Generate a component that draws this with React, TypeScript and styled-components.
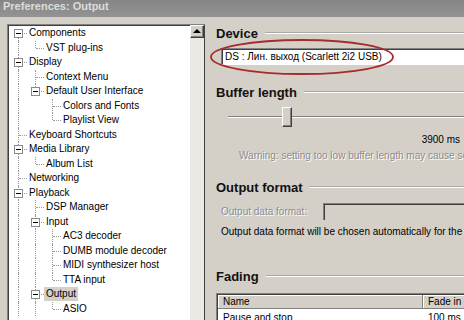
import React from "react";
import styled, { createGlobalStyle } from "styled-components";

const GlobalStyle = createGlobalStyle`
  html, body { margin: 0; padding: 0; background: #d4d0c8; }
  body { font-family: "Liberation Sans", Arial, sans-serif; }
`;

const Window = styled.div`
  width: 464px;
  height: 320px;
  overflow: hidden;
  display: flex;
  flex-direction: column;
  background: #d4d0c8;
  font: 10px "Liberation Sans", Arial, sans-serif;
  color: #000;
`;

const TitleBar = styled.div`
  flex: none;
  height: 17px;
  line-height: 16px;
  padding-left: 3px;
  background: linear-gradient(#868686, #939393);
  color: #dcdcdc;
  font: bold 11px "Liberation Sans", Arial, sans-serif;
`;

const Body = styled.div`
  flex: 1;
  display: flex;
  align-items: flex-start;
  padding-left: 7px;
  min-height: 0;
`;

const TreePanel = styled.div`
  flex: none;
  width: 198px;
  height: 320px;
  margin-top: 7px;
  box-sizing: border-box;
  display: flex;
  background: #fff;
  border-left: 1px solid #808080;
  border-top: 1px solid #808080;
  box-shadow: inset 1px 1px #404040;
`;

const TreeList = styled.div`
  flex: 1;
  padding: 1px 0 0 2px;
  overflow: hidden;
`;

const TreeRow = styled.div`
  display: flex;
  align-items: stretch;
  height: 14.5px;
`;

const Guide = styled.span<{ $line: boolean }>`
  flex: none;
  width: 17px;
  position: relative;
  &::before {
    content: "";
    display: ${(p) => (p.$line ? "block" : "none")};
    position: absolute;
    left: 8px;
    top: 0;
    bottom: 0;
    border-left: 1px dotted #9a9a9a;
  }
`;

const Connector = styled.span<{ $first?: boolean; $last?: boolean }>`
  flex: none;
  width: 17px;
  position: relative;
  &::before {
    content: "";
    position: absolute;
    left: 8px;
    top: ${(p) => (p.$first ? "50%" : "0")};
    bottom: ${(p) => (p.$last ? "50%" : "0")};
    border-left: 1px dotted #9a9a9a;
  }
  &::after {
    content: "";
    position: absolute;
    left: 9px;
    right: 0;
    top: 50%;
    border-top: 1px dotted #9a9a9a;
  }
`;

const Expander = styled.span`
  position: absolute;
  z-index: 1;
  left: 4px;
  top: calc(50% - 4px);
  width: 7px;
  height: 7px;
  border: 1px solid #8a8a8a;
  background: #fff;
  &::after {
    content: "";
    position: absolute;
    left: 1px;
    right: 1px;
    top: 3px;
    height: 1px;
    background: #000;
  }
`;

const Label = styled.span<{ $selected?: boolean }>`
  align-self: center;
  padding: 1px 2px;
  line-height: 12px;
  white-space: nowrap;
  background: ${(p) => (p.$selected ? "#d4d0c8" : "transparent")};
`;

const ScrollBar = styled.div`
  flex: none;
  width: 14px;
  display: flex;
  flex-direction: column;
  background: #ebe9e5;
  border-right: 1px solid #404040;
`;

const ArrowButton = styled.div`
  flex: none;
  height: 13px;
  box-sizing: border-box;
  background: #d4d0c8;
  border: 1px solid;
  border-color: #fff #404040 #404040 #fff;
  box-shadow: inset -1px -1px #808080;
  display: flex;
  align-items: center;
  justify-content: center;
  &::after {
    content: "";
    width: 0;
    height: 0;
    border-left: 4px solid transparent;
    border-right: 4px solid transparent;
    border-bottom: 4px solid #000;
    margin-bottom: 1px;
  }
`;

const RightPanel = styled.div`
  flex: none;
  width: 300px;
  margin-left: 11px;
  padding-top: 8px;
  position: relative;
  display: flex;
  flex-direction: column;
  & > * { flex-shrink: 0; }
`;

const SectionHeading = styled.div<{ $mt: number }>`
  display: flex;
  align-items: center;
  gap: 7px;
  height: 16px;
  margin-top: ${(p) => p.$mt}px;
  font: bold 13px "Liberation Sans", Arial, sans-serif;
  color: #111;
  &::after {
    content: "";
    flex: 1;
    border-top: 1px solid #a8a8a8;
    border-bottom: 1px solid #fff;
  }
`;

const TextField = styled.div`
  margin: 7px 0 0 5px;
  height: 17px;
  box-sizing: border-box;
  background: #fff;
  border-top: 1px solid #808080;
  border-left: 1px solid #808080;
  border-bottom: 1px solid #fff;
  box-shadow: inset 1px 1px #404040;
  display: flex;
  align-items: center;
  padding-left: 3px;
  white-space: nowrap;
`;

const Ellipse = styled.svg`
  position: absolute;
  left: -6px;
  top: 22px;
  overflow: visible;
  pointer-events: none;
`;

const SliderTrack = styled.div`
  position: relative;
  margin: 7px 0 0 12px;
  height: 20px;
  &::before {
    content: "";
    position: absolute;
    left: 0;
    right: 0;
    top: 9px;
    border-top: 1px solid #808080;
    border-bottom: 1px solid #fff;
  }
`;

const SliderThumb = styled.div`
  position: absolute;
  top: 0;
  width: 10px;
  height: 20px;
  box-sizing: border-box;
  background: #d4d0c8;
  border: 1px solid;
  border-color: #fff #404040 #404040 #fff;
  box-shadow: inset -1px -1px #808080;
`;

const ValueText = styled.div`
  margin-top: 7px;
  width: 244px;
  text-align: right;
  line-height: 12px;
`;

const DisabledText = styled.div<{ $ml: number; $mt: number }>`
  margin: ${(p) => p.$mt}px 0 0 ${(p) => p.$ml}px;
  line-height: 12px;
  color: #8c8c8c;
  text-shadow: 1px 1px #fff;
  white-space: nowrap;
`;

const FormatRow = styled.div`
  display: flex;
  align-items: center;
  margin: 8px 0 0 5px;
  height: 17px;
`;

const FormatLabel = styled.span`
  flex: none;
  width: 102px;
  color: #8c8c8c;
  text-shadow: 1px 1px #fff;
  white-space: nowrap;
`;

const DisabledCombo = styled.div`
  flex: 1;
  align-self: stretch;
  box-sizing: border-box;
  background: #d4d0c8;
  border-top: 1px solid #808080;
  border-left: 1px solid #808080;
  box-shadow: inset 1px 1px #404040;
`;

const PlainText = styled.div`
  margin: 6px 0 0 5px;
  line-height: 12px;
  white-space: nowrap;
`;

const Table = styled.div`
  margin-top: 9px;
  background: #fff;
  border-top: 1px solid #808080;
  border-left: 1px solid #808080;
  box-shadow: inset 1px 1px #404040;
  padding: 1px 0 0 1px;
`;

const TableRow = styled.div<{ $header?: boolean }>`
  display: flex;
  height: ${(p) => (p.$header ? 14 : 17)}px;
`;

const HeaderCell = styled.div<{ $w: number }>`
  flex: none;
  width: ${(p) => p.$w}px;
  box-sizing: border-box;
  background: #d4d0c8;
  border-right: 1px solid #808080;
  border-bottom: 1px solid #808080;
  box-shadow: inset 1px 1px #fff;
  padding-left: 5px;
  line-height: 13px;
  white-space: nowrap;
`;

const Cell = styled.div<{ $w: number }>`
  flex: none;
  width: ${(p) => p.$w}px;
  box-sizing: border-box;
  padding: 0 5px;
  line-height: 17px;
  white-space: nowrap;
`;

type Row = {
  label: string;
  guides: boolean[];
  expanded?: boolean;
  first?: boolean;
  last?: boolean;
  selected?: boolean;
};

const rows: Row[] = [
  { label: "Components", guides: [], expanded: true, first: true },
  { label: "VST plug-ins", guides: [true], last: true },
  { label: "Display", guides: [], expanded: true },
  { label: "Context Menu", guides: [true] },
  { label: "Default User Interface", guides: [true], expanded: true, last: true },
  { label: "Colors and Fonts", guides: [true, false] },
  { label: "Playlist View", guides: [true, false], last: true },
  { label: "Keyboard Shortcuts", guides: [] },
  { label: "Media Library", guides: [], expanded: true },
  { label: "Album List", guides: [true], last: true },
  { label: "Networking", guides: [] },
  { label: "Playback", guides: [], expanded: true },
  { label: "DSP Manager", guides: [true] },
  { label: "Input", guides: [true], expanded: true },
  { label: "AC3 decoder", guides: [true, true] },
  { label: "DUMB module decoder", guides: [true, true] },
  { label: "MIDI synthesizer host", guides: [true, true] },
  { label: "TTA input", guides: [true, true], last: true },
  { label: "Output", guides: [true], expanded: true, selected: true },
  { label: "ASIO", guides: [true, true], last: true },
];

const bufferMs = 3900;
const bufferMax = 20000;
const trackWidth = 288;
const thumbLeft = Math.round((bufferMs / bufferMax) * (trackWidth - 10));

export default function App() {
  return (
    <>
      <GlobalStyle />
      <Window>
        <TitleBar>Preferences: Output</TitleBar>
        <Body>
          <TreePanel>
            <TreeList>
              {rows.map((r) => (
                <TreeRow key={r.label}>
                  {r.guides.map((g, i) => (
                    <Guide key={i} $line={g} />
                  ))}
                  <Connector $first={r.first} $last={r.last}>
                    {r.expanded && <Expander />}
                  </Connector>
                  <Label $selected={r.selected}>{r.label}</Label>
                </TreeRow>
              ))}
            </TreeList>
            <ScrollBar>
              <ArrowButton />
            </ScrollBar>
          </TreePanel>
          <RightPanel>
            <SectionHeading $mt={0}>Device</SectionHeading>
            <TextField>DS : Лин. выход (Scarlett 2i2 USB)</TextField>
            <Ellipse width="184" height="36" viewBox="0 0 184 36">
              <ellipse cx="92" cy="18" rx="91" ry="17" fill="none" stroke="#a82c2c" strokeWidth="1.8" />
            </Ellipse>
            <SectionHeading $mt={19}>Buffer length</SectionHeading>
            <SliderTrack>
              <SliderThumb style={{ left: thumbLeft }} />
            </SliderTrack>
            <ValueText>{bufferMs} ms</ValueText>
            <DisabledText $ml={23} $mt={4}>
              Warning: setting too low buffer length may cause sound dropouts.
            </DisabledText>
            <SectionHeading $mt={17}>Output format</SectionHeading>
            <FormatRow>
              <FormatLabel>Output data format:</FormatLabel>
              <DisabledCombo />
            </FormatRow>
            <PlainText>Output data format will be chosen automatically for the selected device.</PlainText>
            <SectionHeading $mt={30}>Fading</SectionHeading>
            <Table>
              <TableRow $header>
                <HeaderCell $w={205}>Name</HeaderCell>
                <HeaderCell $w={60}>Fade in</HeaderCell>
                <HeaderCell $w={60}>Fade out</HeaderCell>
              </TableRow>
              <TableRow>
                <Cell $w={205}>Pause and stop</Cell>
                <Cell $w={60}>100 ms</Cell>
                <Cell $w={60}>100 ms</Cell>
              </TableRow>
            </Table>
          </RightPanel>
        </Body>
      </Window>
    </>
  );
}
